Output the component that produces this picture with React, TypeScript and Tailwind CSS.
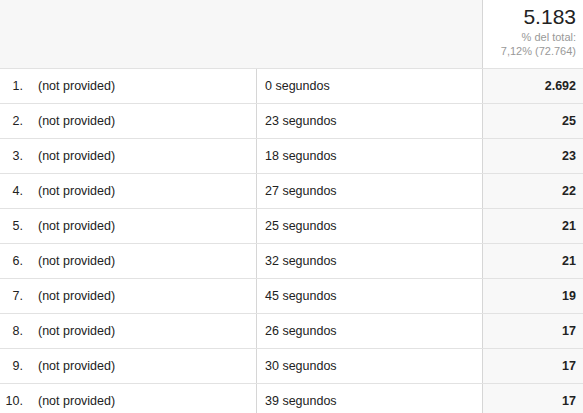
const rows = [
  { n: 1, secs: "0 segundos", value: "2.692" },
  { n: 2, secs: "23 segundos", value: "25" },
  { n: 3, secs: "18 segundos", value: "23" },
  { n: 4, secs: "27 segundos", value: "22" },
  { n: 5, secs: "25 segundos", value: "21" },
  { n: 6, secs: "32 segundos", value: "21" },
  { n: 7, secs: "45 segundos", value: "19" },
  { n: 8, secs: "26 segundos", value: "17" },
  { n: 9, secs: "30 segundos", value: "17" },
  { n: 10, secs: "39 segundos", value: "17" },
];

export default function App() {
  return (
    <div className="h-[413px] w-[583px] overflow-hidden bg-white font-['Liberation_Sans',Arial,sans-serif] text-[12.5px] text-[#222]">
      {/* Header */}
      <div className="grid h-[69px] grid-cols-[483px_1fr] border-b border-[#e2e2e2]">
        <div className="border-r border-[#d6d6d6] bg-[#f7f7f7]" />
        <div className="flex flex-col items-end bg-white pr-[7px] pt-[5px]">
          <span className="text-[21px] leading-[24px] text-[#222]">5.183</span>
          <span className="mt-[1px] text-[11px] leading-[14px] text-[#999]">% del total:</span>
          <span className="text-[11px] leading-[14px] text-[#999]">7,12% (72.764)</span>
        </div>
      </div>

      {/* Rows */}
      {rows.map((r) => (
        <div
          key={r.n}
          className="grid h-[35px] grid-cols-[257px_226px_1fr] border-b border-[#e2e2e2]"
        >
          <div className="flex items-center border-r border-[#d6d6d6] pt-[1px]">
            <span className="w-[23px] text-right">{r.n}.</span>
            <span className="ml-[15px]">(not provided)</span>
          </div>
          <div className="flex items-center border-r border-[#d6d6d6] pl-[8px] pt-[1px]">
            {r.secs}
          </div>
          <div className="flex items-center justify-end bg-[#f8f8f8] pr-[7px] pt-[1px] text-[12.5px] font-bold">
            {r.value}
          </div>
        </div>
      ))}
    </div>
  );
}
